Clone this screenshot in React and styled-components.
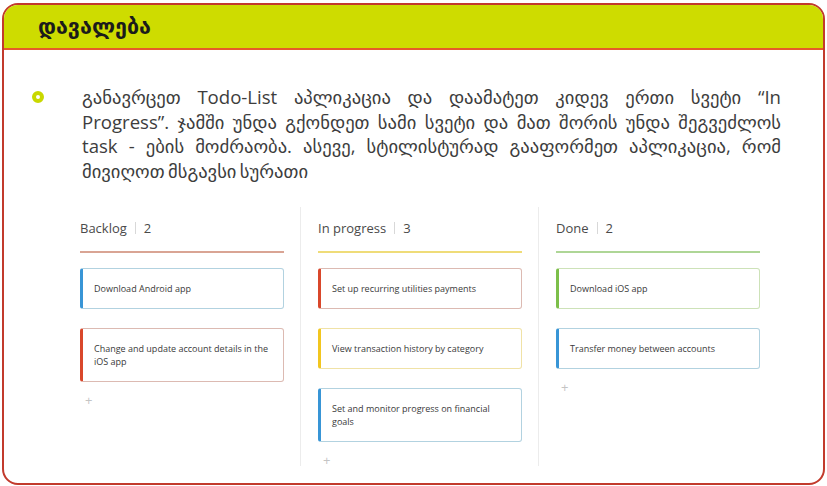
import React from 'react'
import styled, { createGlobalStyle } from 'styled-components'

const GlobalStyle = createGlobalStyle`
  body {
    margin: 0;
    background: #ffffff;
    font-family: "Open Sans", "DejaVu Sans", sans-serif;
  }
`

const tones = {
  red: { main: '#d9472b', soft: '#dcbab2' },
  blue: { main: '#3895d6', soft: '#b2d2e0' },
  yellow: { main: '#f2c61f', soft: '#f0e2a6' },
  green: { main: '#7cbf4a', soft: '#cde2b8' },
}

const Frame = styled.div`
  box-sizing: border-box;
  width: 823px;
  height: 482px;
  margin: 3px 2px 0;
  border: 2px solid #c23a2c;
  border-radius: 16px;
  overflow: hidden;
  background: #ffffff;
`

const Header = styled.header`
  box-sizing: border-box;
  height: 45px;
  display: flex;
  align-items: center;
  padding-left: 34px;
  background: #cedc00;
  border-bottom: 2px solid #e65a2a;
`

const Title = styled.h1`
  margin: 0;
  font-family: "DejaVu Sans", sans-serif;
  font-size: 21.5px;
  font-weight: bold;
  color: #1b1b1b;
`

const Task = styled.section`
  display: flex;
  align-items: flex-start;
  padding: 35px 0 0 28px;
`

const Bullet = styled.span`
  flex: none;
  box-sizing: border-box;
  width: 12px;
  height: 12px;
  margin-top: 6px;
  border-radius: 50%;
  border: 4px solid #c9d800;
  background: #ffffff;
`

const Paragraph = styled.div`
  width: 699px;
  margin-left: 38px;
  font-family: "Open Sans", "DejaVu Sans", sans-serif;
  font-size: 18.6px;
  line-height: 24.5px;
  word-spacing: -1.5px;
  color: #3d3d3d;
`

const Line = styled.span`
  display: block;
  white-space: nowrap;
  text-align: ${p => (p.last ? 'left' : 'justify')};
  text-align-last: ${p => (p.last ? 'left' : 'justify')};
`

const Board = styled.div`
  display: flex;
  margin: 24px 0 0 58px;
  height: 259px;
`

const Column = styled.div`
  box-sizing: border-box;
  width: 238px;
  padding: 12px 16px 0 17px;
  border-left: 1px solid ${p => (p.first ? 'transparent' : '#ececec')};
`

const ColumnTitle = styled.div`
  display: flex;
  align-items: center;
  height: 18px;
  padding-bottom: 14px;
  border-bottom: 2px solid ${p => p.line};
  font-size: 13px;
  color: #4a4a4a;
`

const Divider = styled.span`
  width: 1px;
  height: 12px;
  margin: 0 8px;
  background: #d8d8d8;
`

const Card = styled.div`
  box-sizing: border-box;
  margin-top: ${p => (p.first ? '15px' : '19px')};
  padding: 13px 14px 13px 11px;
  border: 1px solid ${p => tones[p.tone].soft};
  border-left: 3px solid ${p => tones[p.tone].main};
  border-radius: 3px;
  font-size: 9px;
  line-height: 13px;
  color: #3a3a3a;
`

const Add = styled.div`
  margin: 9px 0 0 5px;
  font-size: 13px;
  color: #c4c4c4;
`

const columns = [
  {
    name: 'Backlog',
    line: '#d9a494',
    cards: [
      { tone: 'blue', text: 'Download Android app' },
      { tone: 'red', text: 'Change and update account details in the iOS app' },
    ],
  },
  {
    name: 'In progress',
    line: '#efdc78',
    cards: [
      { tone: 'red', text: 'Set up recurring utilities payments' },
      { tone: 'yellow', text: 'View transaction history by category' },
      { tone: 'blue', text: 'Set and monitor progress on financial goals' },
    ],
  },
  {
    name: 'Done',
    line: '#aed696',
    cards: [
      { tone: 'green', text: 'Download iOS app' },
      { tone: 'blue', text: 'Transfer money between accounts' },
    ],
  },
]

export default function App() {
  return (
    <>
      <GlobalStyle />
      <Frame>
        <Header>
          <Title>დავალება</Title>
        </Header>
        <Task>
          <Bullet />
          <Paragraph>
            <Line>განავრცეთ Todo-List აპლიკაცია და დაამატეთ კიდევ ერთი სვეტი “In</Line>
            <Line>Progress”. ჯამში უნდა გქონდეთ სამი სვეტი და მათ შორის უნდა შეგვეძლოს</Line>
            <Line>task - ების მოძრაობა. ასევე, სტილისტურად გააფორმეთ აპლიკაცია, რომ</Line>
            <Line last>მივიღოთ მსგავსი სურათი</Line>
          </Paragraph>
        </Task>
        <Board>
          {columns.map((col, i) => (
            <Column key={col.name} first={i === 0}>
              <ColumnTitle line={col.line}>
                {col.name}
                <Divider />
                {col.cards.length}
              </ColumnTitle>
              {col.cards.map((card, j) => (
                <Card key={card.text} tone={card.tone} first={j === 0}>
                  {card.text}
                </Card>
              ))}
              <Add>+</Add>
            </Column>
          ))}
        </Board>
      </Frame>
    </>
  )
}
